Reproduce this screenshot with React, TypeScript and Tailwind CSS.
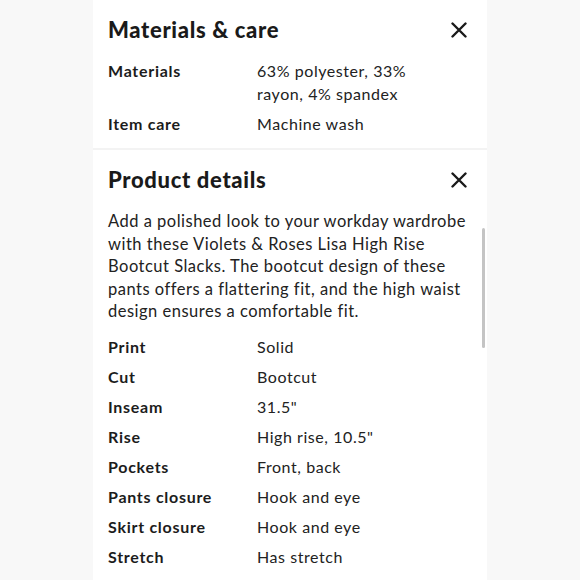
import React from "react";

const font = { fontFamily: "Lato, 'Noto Sans', sans-serif" };

function CloseIcon() {
  return (
    <svg width="16" height="16" viewBox="0 0 16 16" className="shrink-0">
      <path d="M1.5 1.5 L14.5 14.5 M14.5 1.5 L1.5 14.5" stroke="#1a1a1a" strokeWidth="2.4" strokeLinecap="round" fill="none" />
    </svg>
  );
}

function Row({ label, value }: { label: string; value: string }) {
  return (
    <div className="flex">
      <div className="w-[149px] shrink-0 font-bold text-[16px] leading-[23px] tracking-[0.045em] text-[#1c1c1c]">{label}</div>
      <div className="flex-1 text-[16px] leading-[23px] tracking-[0.035em] text-[#222]">{value}</div>
    </div>
  );
}

const details: [string, string][] = [
  ["Print", "Solid"],
  ["Cut", "Bootcut"],
  ["Inseam", "31.5\""],
  ["Rise", "High rise, 10.5\""],
  ["Pockets", "Front, back"],
  ["Pants closure", "Hook and eye"],
  ["Skirt closure", "Hook and eye"],
  ["Stretch", "Has stretch"],
];

export default function App() {
  return (
    <div className="w-[580px] h-[580px] bg-[#f8f8f8] flex justify-center overflow-hidden" style={font}>
      <div className="w-[394px] bg-white relative flex flex-col">
        <section className="pt-[16px] pl-[15px] pr-[20px] h-[148px]">
          <div className="flex items-center justify-between">
            <h2 className="text-[22px] leading-[28px] font-black tracking-[0.03em] text-[#1a1a1a]">Materials &amp; care</h2>
            <CloseIcon />
          </div>
          <div className="mt-[15px] flex flex-col gap-[7px]">
            <div className="flex">
              <div className="w-[149px] shrink-0 font-bold text-[16px] leading-[23px] tracking-[0.045em] text-[#1c1c1c]">Materials</div>
              <div className="flex-1 text-[16px] leading-[23px] tracking-[0.035em] text-[#222]">
                63% polyester, 33%
                <br />
                rayon, 4% spandex
              </div>
            </div>
            <Row label="Item care" value="Machine wash" />
          </div>
        </section>
        <div className="h-[2px] bg-[#f3f3f3]" />
        <section className="pt-[16px] pl-[15px] pr-[20px] flex-1">
          <div className="flex items-center justify-between">
            <h2 className="text-[22px] leading-[28px] font-black tracking-[0.03em] text-[#1a1a1a]">Product details</h2>
            <CloseIcon />
          </div>
          <p className="mt-[16px] text-[16.5px] leading-[22.5px] tracking-[0.03em] text-[#222] whitespace-nowrap">
            Add a polished look to your workday wardrobe
            <br />
            with these Violets &amp; Roses Lisa High Rise
            <br />
            Bootcut Slacks. The bootcut design of these
            <br />
            pants offers a flattering fit, and the high waist
            <br />
            design ensures a comfortable fit.
          </p>
          <div className="mt-[12px] flex flex-col gap-[7px]">
            {details.map(([l, v]) => (
              <Row key={l} label={l} value={v} />
            ))}
          </div>
        </section>
        <div className="absolute left-[389px] top-[228px] w-[3px] h-[120px] rounded-full bg-[#c4c4c4]" />
      </div>
    </div>
  );
}
